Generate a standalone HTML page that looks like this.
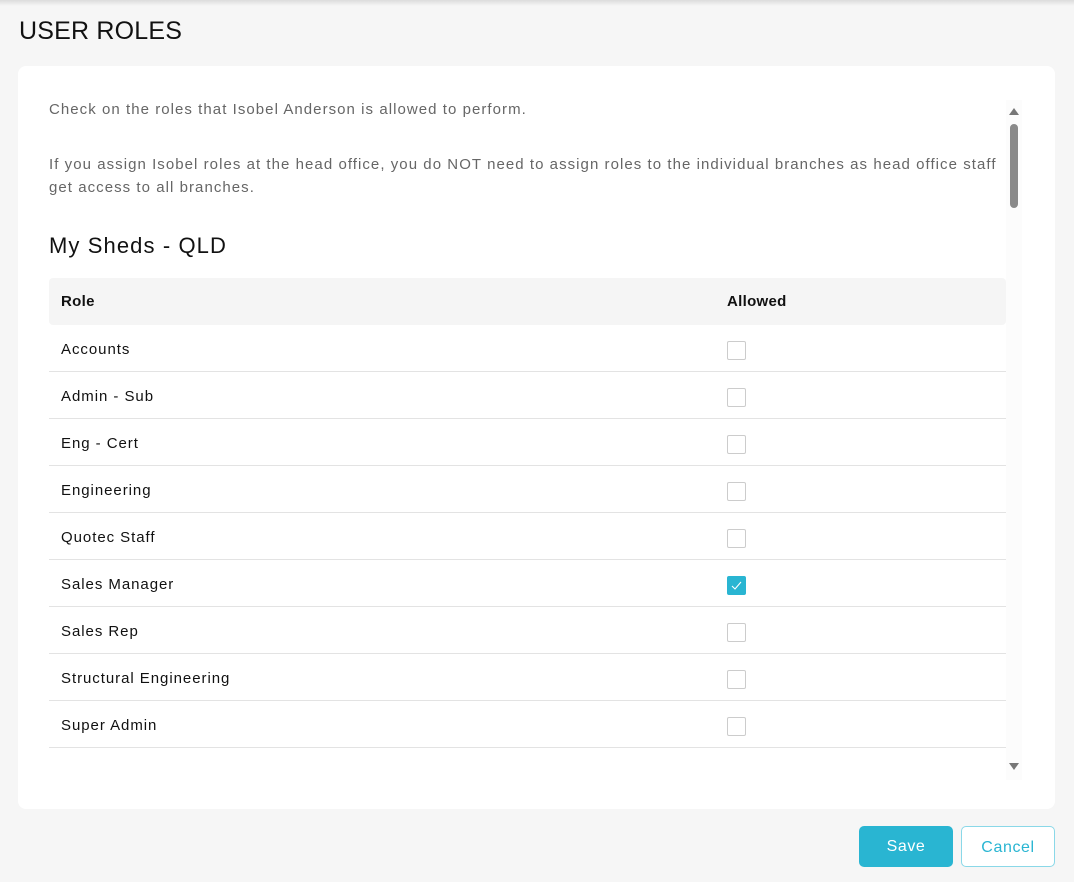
<!DOCTYPE html>
<html><head><style>
body{margin:0;width:1074px;height:882px;background:#f6f6f6;font-family:"Liberation Sans",sans-serif;position:relative;overflow:hidden}
.topsh{position:absolute;left:0;top:0;width:1074px;height:6px;background:linear-gradient(#dcdcdc,#f6f6f6)}
h1{position:absolute;left:19px;top:17px;margin:0;font-size:25px;font-weight:normal;color:#111;letter-spacing:0.2px}
.card{position:absolute;left:18px;top:66px;width:1037px;height:743px;background:#fff;border-radius:8px}
.p{position:absolute;left:49px;color:#666;font-size:15px;line-height:23px;letter-spacing:1.05px}
h2{position:absolute;left:49px;top:233px;margin:0;font-size:22px;font-weight:normal;color:#111;letter-spacing:1.1px}
.th{position:absolute;left:49px;top:278px;width:957px;height:47px;background:#f5f5f5;border-radius:4px;font-size:15px;font-weight:bold;color:#111;letter-spacing:0.3px}
.row{position:absolute;left:49px;width:957px;height:46px;border-bottom:1px solid #e3e3e3;font-size:15px;color:#111;letter-spacing:0.95px}
.c1{position:absolute;left:12px;top:16px}
.c2{position:absolute;left:678px;top:16px}
.cb{position:absolute;left:678px;top:16px;width:19px;height:19px;border:1px solid #ccc;border-radius:2px;box-sizing:border-box}
.cb.on{background:#29b5d2;border-color:#29b5d2}
.track{position:absolute;left:1006px;top:100px;width:16px;height:680px;background:#fcfcfc}
.thumb{position:absolute;left:1010px;top:124px;width:8px;height:84px;background:#8a8a8a;border-radius:4px}
.btn{position:absolute;top:826px;height:41px;border-radius:5px;font-size:16px;text-align:center;line-height:41px;box-sizing:border-box;letter-spacing:0.6px}
</style></head><body>
<div class="topsh"></div>
<h1>USER ROLES</h1>
<div class="card"></div>
<div class="p" style="top:98px">Check on the roles that Isobel Anderson is allowed to perform.</div>
<div class="p" style="top:153px;width:960px">If you assign Isobel roles at the head office, you do NOT need to assign roles to the individual branches as head office staff get access to all branches.</div>
<h2>My Sheds - QLD</h2>
<div class="th"><span class="c1" style="top:15px">Role</span><span class="c2" style="top:15px">Allowed</span></div>
<div class="row" style="top:325px"><span class="c1">Accounts</span><span class="cb"></span></div>
<div class="row" style="top:372px"><span class="c1">Admin - Sub</span><span class="cb"></span></div>
<div class="row" style="top:419px"><span class="c1">Eng - Cert</span><span class="cb"></span></div>
<div class="row" style="top:466px"><span class="c1">Engineering</span><span class="cb"></span></div>
<div class="row" style="top:513px"><span class="c1">Quotec Staff</span><span class="cb"></span></div>
<div class="row" style="top:560px"><span class="c1">Sales Manager</span><span class="cb on"><svg width="19" height="19" style="position:absolute;left:-1px;top:-1px"><path d="M5 10 L8 13 L14 6" stroke="#fff" stroke-width="1.1" fill="none"/></svg></span></div>
<div class="row" style="top:607px"><span class="c1">Sales Rep</span><span class="cb"></span></div>
<div class="row" style="top:654px"><span class="c1">Structural Engineering</span><span class="cb"></span></div>
<div class="row" style="top:701px"><span class="c1">Super Admin</span><span class="cb"></span></div>
<div class="track"></div>
<div class="thumb"></div>
<svg style="position:absolute;left:1008px;top:107px" width="12" height="9"><path d="M1 8 L6 1 L11 8Z" fill="#777"/></svg>
<svg style="position:absolute;left:1008px;top:762px" width="12" height="9"><path d="M1 1 L6 8 L11 1Z" fill="#777"/></svg>
<div class="btn" style="left:859px;width:94px;background:#29b5d2;color:#fff">Save</div>
<div class="btn" style="left:961px;width:94px;border:1px solid #8ad8e8;color:#29b5d2;background:#fff">Cancel</div>
</body></html>
